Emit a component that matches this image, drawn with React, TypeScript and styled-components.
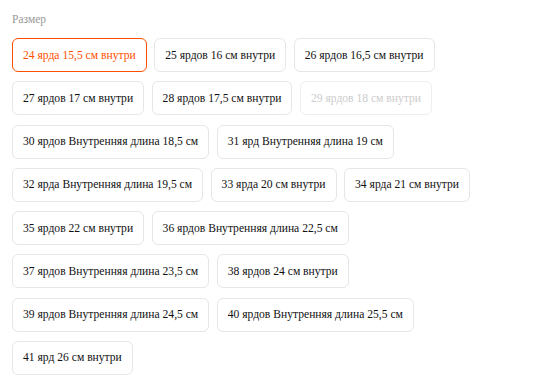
import React, { useState } from "react";
import styled, { createGlobalStyle } from "styled-components";

const GlobalStyle = createGlobalStyle`
  body {
    margin: 0;
    background: #fff;
    font-family: "Liberation Serif", "Times New Roman", serif;
  }
`;

const sizes = [
  "24 ярда 15,5 см внутри",
  "25 ярдов 16 см внутри",
  "26 ярдов 16,5 см внутри",
  "27 ярдов 17 см внутри",
  "28 ярдов 17,5 см внутри",
  "29 ярдов 18 см внутри",
  "30 ярдов Внутренняя длина 18,5 см",
  "31 ярд Внутренняя длина 19 см",
  "32 ярда Внутренняя длина 19,5 см",
  "33 ярда 20 см внутри",
  "34 ярда 21 см внутри",
  "35 ярдов 22 см внутри",
  "36 ярдов Внутренняя длина 22,5 см",
  "37 ярдов Внутренняя длина 23,5 см",
  "38 ярдов 24 см внутри",
  "39 ярдов Внутренняя длина 24,5 см",
  "40 ярдов Внутренняя длина 25,5 см",
  "41 ярд 26 см внутри",
];

const disabled = ["29 ярдов 18 см внутри"];

export default function App() {
  const [selected, setSelected] = useState(sizes[0]);

  return (
    <>
      <GlobalStyle />
      <Section>
        <Label>Размер</Label>
        <Options>
          {sizes.map((s) => {
            const off = disabled.includes(s);
            return (
              <Option
                key={s}
                $active={s === selected}
                $disabled={off}
                onClick={() => !off && setSelected(s)}
              >
                {s}
              </Option>
            );
          })}
        </Options>
      </Section>
    </>
  );
}

const Section = styled.div`
  padding: 12px 12px 0 12px;
  width: 480px;
`;

const Label = styled.div`
  font-size: 11.5px;
  line-height: 14px;
  color: #999;
  margin-bottom: 12px;
`;

const Options = styled.div`
  display: flex;
  flex-wrap: wrap;
  column-gap: 7.5px;
  row-gap: 9.25px;
`;

const Option = styled.div<{ $active?: boolean; $disabled?: boolean }>`
  box-sizing: border-box;
  height: 34px;
  padding: 0 10px;
  display: flex;
  align-items: center;
  font-size: 11.6px;
  white-space: nowrap;
  border-radius: 6px;
  cursor: ${(p) => (p.$disabled ? "not-allowed" : "pointer")};
  border: 1px solid
    ${(p) => (p.$active ? "#ff5000" : p.$disabled ? "#eee" : "#e6e6e6")};
  color: ${(p) => (p.$active ? "#ff5000" : p.$disabled ? "#ccc" : "#111")};
`;
